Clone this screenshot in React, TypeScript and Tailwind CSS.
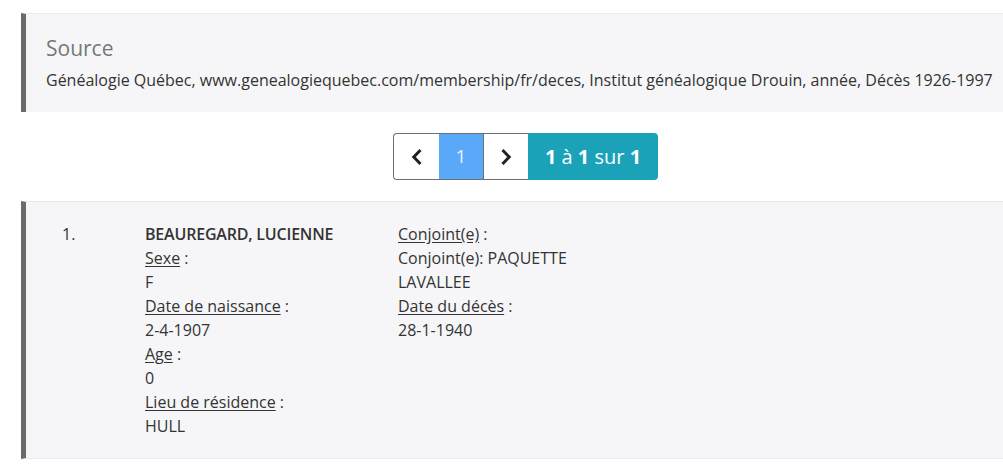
import React from 'react';

const font = { fontFamily: '"Open Sans", "Liberation Sans", sans-serif' };

function Field({ label, value }: { label: string; value?: React.ReactNode }) {
  return (
    <>
      <div>
        <span className="underline underline-offset-2">{label}</span> :
      </div>
      {value !== undefined && <div>{value}</div>}
    </>
  );
}

export default function App() {
  return (
    <div className="min-h-[467px] bg-white pt-[13px] pl-[21px] text-[#333]" style={font}>
      {/* Source */}
      <div className="border-l-[5px] border-l-[#6b6b6b] border-t border-t-[#e9e9ec] bg-[#f6f6f8] h-[99px] pl-[20px] pt-[21px]">
        <div className="text-[21px] leading-[27px] text-[#777]">Source</div>
        <div className="mt-[7px] text-[16px] leading-[22px] whitespace-nowrap">
          Généalogie Québec, www.genealogiequebec.com/membership/fr/deces, Institut généalogique Drouin, année, Décès 1926-1997
        </div>
      </div>

      {/* Pagination */}
      <div className="flex justify-center mt-[21px]">
        <div className="flex h-[47px] ml-[27px]">
          <button className="w-[46px] flex items-center justify-center border border-[#6f6f6f] border-r-0 rounded-l-[4px] bg-white text-[#222]">
            <svg width="14" height="18" viewBox="0 0 14 18"><path d="M10.5 2 L3.8 9 L10.5 16" fill="none" stroke="currentColor" strokeWidth="3" /></svg>
          </button>
          <div className="w-[44px] flex items-center justify-center bg-[#5aa8f8] text-[#e6f1fe] text-[19px] border-y border-[#6f6f6f]">1</div>
          <button className="w-[45px] flex items-center justify-center border-y border-l border-[#6f6f6f] bg-white text-[#222]">
            <svg width="14" height="18" viewBox="0 0 14 18"><path d="M3.5 2 L10.2 9 L3.5 16" fill="none" stroke="currentColor" strokeWidth="3" /></svg>
          </button>
          <div className="w-[130px] flex items-center justify-center bg-[#19a2b8] text-white text-[20px] rounded-r-[4px]">
            <b className="font-bold">1</b>&nbsp;à&nbsp;<b className="font-bold">1</b>&nbsp;sur&nbsp;<b className="font-bold">1</b>
          </div>
        </div>
      </div>

      {/* Record */}
      <div className="mt-[21px] border-l-[5px] border-l-[#6b6b6b] border-t border-t-[#e9e9ec] border-b border-b-[#e9e9ec] bg-[#f6f6f8] h-[258px] pt-[20px] text-[16px] leading-[24px]">
        <div className="flex">
          <div className="w-[119px] pl-[36px]">1.</div>
          <div className="w-[253px]">
            <div className="font-semibold tracking-[-0.2px]">BEAUREGARD, LUCIENNE</div>
            <Field label="Sexe" value="F" />
            <Field label="Date de naissance" value="2-4-1907" />
            <Field label="Age" value="0" />
            <Field label="Lieu de résidence" value="HULL" />
          </div>
          <div>
            <Field label="Conjoint(e)" />
            <div>Conjoint(e): PAQUETTE</div>
            <div>LAVALLEE</div>
            <Field label="Date du décès" value="28-1-1940" />
          </div>
        </div>
      </div>
    </div>
  );
}
